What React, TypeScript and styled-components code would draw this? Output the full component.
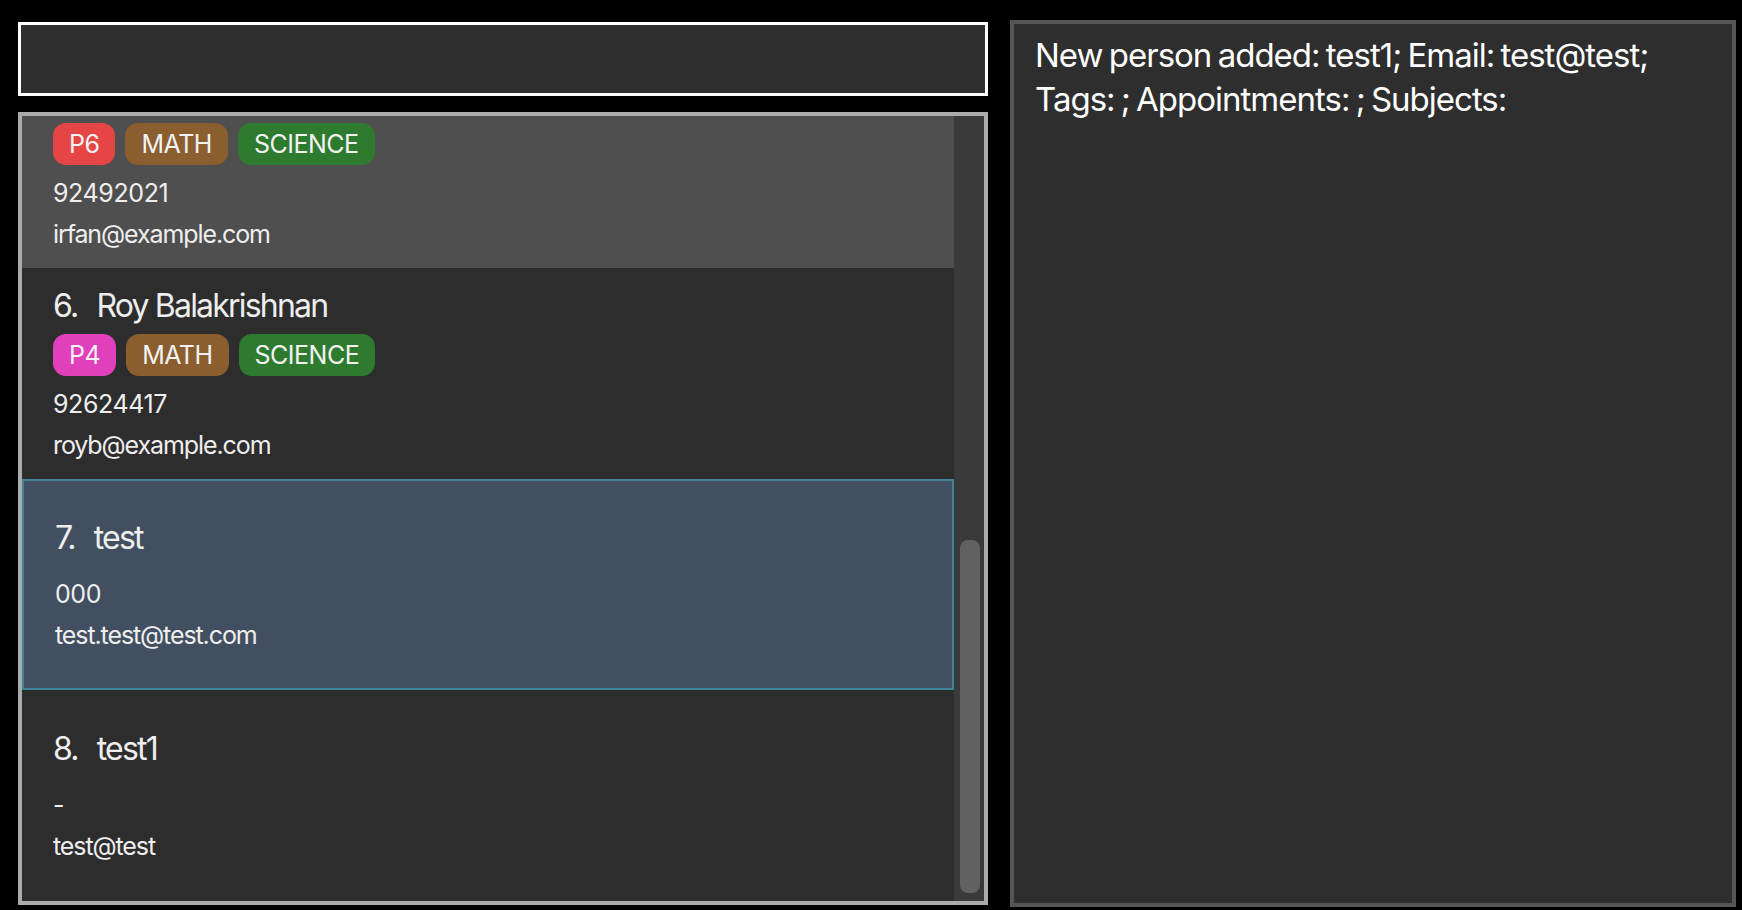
import { useLayoutEffect, useRef } from "react";
import styled, { createGlobalStyle } from "styled-components";

type Tag = { label: string; color: string };
type Person = {
  id: number;
  name: string;
  tags: Tag[];
  phone: string;
  email: string;
};

const P6 = { label: "P6", color: "#e64545" };
const P4 = { label: "P4", color: "#e040bb" };
const P5 = { label: "P5", color: "#3f7fd8" };
const MATH = { label: "MATH", color: "#8b5e30" };
const SCIENCE = { label: "SCIENCE", color: "#2e7b30" };
const ENGLISH = { label: "ENGLISH", color: "#6a4bb5" };

const persons: Person[] = [
  { id: 1, name: "Alex Yeoh", tags: [P5, MATH], phone: "87438807", email: "alexyeoh@example.com" },
  { id: 2, name: "Bernice Yu", tags: [P4, ENGLISH], phone: "99272758", email: "berniceyu@example.com" },
  { id: 3, name: "Charlotte Oliveiro", tags: [P6, SCIENCE], phone: "93210283", email: "charlotte@example.com" },
  { id: 4, name: "David Li", tags: [P5, MATH, ENGLISH], phone: "91031282", email: "lidavid@example.com" },
  { id: 5, name: "Irfan Ibrahim", tags: [P6, MATH, SCIENCE], phone: "92492021", email: "irfan@example.com" },
  { id: 6, name: "Roy Balakrishnan", tags: [P4, MATH, SCIENCE], phone: "92624417", email: "royb@example.com" },
  { id: 7, name: "test", tags: [], phone: "000", email: "test.test@test.com" },
  { id: 8, name: "test1", tags: [], phone: "-", email: "test@test" },
];

const GlobalStyle = createGlobalStyle`
  body {
    margin: 0;
    background: #000000;
    font-family: Inter, "Liberation Sans", sans-serif;
  }
`;

function PersonCard(props: { person: Person; state: "normal" | "hover" | "selected" }) {
  return (
    <Card $state={props.state}>
      <Name>
        <Index>{props.person.id + "."}</Index>
        {props.person.name}
      </Name>
      <Tags>
        {props.person.tags.map((tag, i) => (
          <Chip key={i} $color={tag.color}>
            {tag.label}
          </Chip>
        ))}
      </Tags>
      <Phone>{props.person.phone}</Phone>
      <Email>{props.person.email}</Email>
    </Card>
  );
}

function App() {
  const viewRef = useRef<HTMLDivElement>(null);

  // list is scrolled all the way down, like in the app after adding test1
  useLayoutEffect(() => {
    if (viewRef.current) viewRef.current.scrollTop = viewRef.current.scrollHeight;
  }, []);

  return (
    <Page>
      <GlobalStyle />
      <LeftColumn>
        <CommandBox />
        <PersonList>
          <Viewport ref={viewRef}>
            {persons.map((p) => (
              <PersonCard
                key={p.id}
                person={p}
                state={p.id == 7 ? "selected" : p.id == 5 ? "hover" : "normal"}
              />
            ))}
          </Viewport>
          <ScrollTrack>
            <Thumb />
          </ScrollTrack>
        </PersonList>
      </LeftColumn>
      <ResultPanel>
        New person added: test1; Email: test@test;
        <br />
        Tags: ; Appointments: ; Subjects:
      </ResultPanel>
    </Page>
  );
}

const Page = styled.div`
  display: flex;
  gap: 22px;
  height: 910px;
  box-sizing: border-box;
  padding: 20px 6px 3px 18px;
`;

const LeftColumn = styled.div`
  width: 970px;
  display: flex;
  flex-direction: column;
  gap: 16px;
  padding-top: 2px;
  padding-bottom: 2px;
`;

const CommandBox = styled.div`
  height: 74px;
  box-sizing: border-box;
  border: 3px solid #ffffff;
  background: #2f2f2f;
`;

const PersonList = styled.div`
  flex: 1;
  min-height: 0;
  display: flex;
  border: 4px solid #ababab;
  background: #2d2d2d;
`;

const Viewport = styled.div`
  flex: 1;
  overflow: hidden;
`;

const ScrollTrack = styled.div`
  width: 30px;
  box-sizing: border-box;
  background: #3a3a3a;
  padding: 0 4px 8px 6px;
  display: flex;
  flex-direction: column;
  justify-content: flex-end;
`;

const Thumb = styled.div`
  height: 353px;
  border-radius: 8px;
  background: #616161;
`;

const Card = styled.div<{ $state: "normal" | "hover" | "selected" }>`
  height: 211px;
  box-sizing: border-box;
  display: flex;
  flex-direction: column;
  justify-content: center;
  gap: 8px;
  padding: 5px 0 0 31px;
  color: #eeeeee;
  background: ${(p) =>
    p.$state == "selected" ? "#424f60" : p.$state == "hover" ? "#4f4f4f" : "#2d2d2d"};
  border: ${(p) => (p.$state == "selected" ? "2px solid #3d8499" : "none")};
`;

const Name = styled.div`
  font-size: 32px;
  line-height: 40px;
  letter-spacing: -1.8px;
  white-space: nowrap;
`;

const Index = styled.span`
  margin-right: 19px;
`;

const Tags = styled.div`
  display: flex;
  gap: 10px;
`;

const Chip = styled.span<{ $color: string }>`
  height: 42px;
  box-sizing: border-box;
  padding: 0 16px;
  border-radius: 13px;
  background: ${(p) => p.$color};
  color: #f2f2f2;
  font-size: 25px;
  line-height: 42px;
  letter-spacing: -0.5px;
`;

const Phone = styled.div`
  font-size: 25px;
  line-height: 41px;
  letter-spacing: -0.4px;
`;

const Email = styled(Phone)`
  margin-top: -8px;
  letter-spacing: -1.1px;
`;

const ResultPanel = styled.div`
  flex: 1;
  box-sizing: border-box;
  border: 4px solid #555555;
  background: #2e2e2e;
  padding: 9px 21px;
  color: #ffffff;
  font-size: 33px;
  line-height: 44px;
  letter-spacing: -1px;
  word-spacing: -2px;
`;

export default App;
